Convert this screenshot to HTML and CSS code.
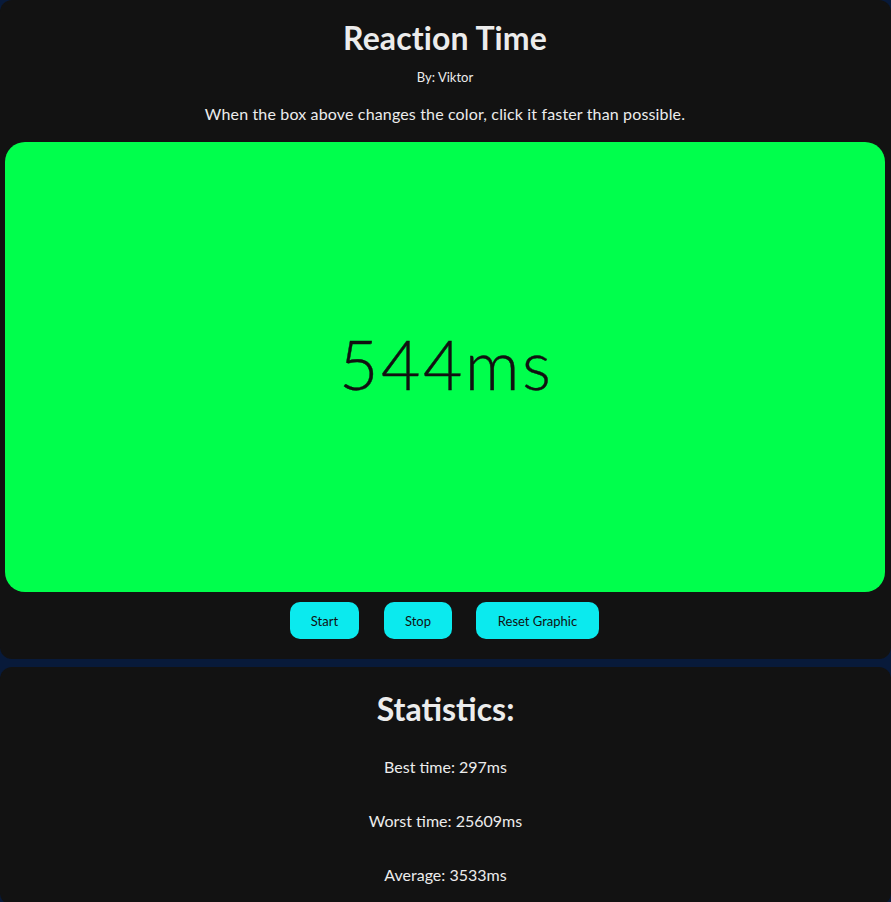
FILE: index.html
```html
<!DOCTYPE html>
<html lang="en">
<head>
<meta charset="utf-8">
<title>Reaction Time</title>
<link rel="stylesheet" href="styles.css">
</head>
<body>
<main class="page">
  <section class="card game">
    <h1 class="title">Reaction Time</h1>
    <p class="author">By: Viktor</p>
    <p class="desc">When the box above changes the color, click it faster than possible.</p>
    <div class="box"><span class="result">544ms</span></div>
    <div class="controls">
      <button class="btn btn-start">Start</button>
      <button class="btn btn-stop">Stop</button>
      <button class="btn btn-wide">Reset Graphic</button>
    </div>
  </section>
  <section class="card stats">
    <h2 class="stats-title">Statistics:</h2>
    <p class="stat">Best time: 297ms</p>
    <p class="stat">Worst time: 25609ms</p>
    <p class="stat">Average: 3533ms</p>
  </section>
</main>
</body>
</html>
```

FILE: styles.css
```css
html, body {
  margin: 0;
  padding: 0;
  background: #081a3a;
}
body {
  font-family: "Lato", "Open Sans", sans-serif;
  color: #ececec;
}
.page {
  display: flex;
  flex-direction: column;
  gap: 8px;
}
.card {
  background: #121212;
  border-radius: 12px;
  text-align: center;
}
.game {
  padding: 0 6px 20px 5px;
  display: flex;
  flex-direction: column;
  align-items: stretch;
}
.title {
  margin: 19px 0 0;
  font-size: 32px;
  line-height: 38px;
  font-weight: 700;
  letter-spacing: 0.1px;
}
.author {
  margin: 12px 0 0;
  font-size: 13px;
  line-height: 16px;
}
.desc {
  margin: 19px 0 0;
  font-size: 16px;
  line-height: 20px;
  letter-spacing: 0.15px;
}
.box {
  margin-top: 18px;
  height: 450px;
  background: #00ff4c;
  border-radius: 20px;
  display: flex;
  align-items: center;
  justify-content: center;
}
.result {
  color: #111111;
  font-size: 68px;
  font-weight: 300;
  line-height: 1;
  letter-spacing: 2.5px;
  padding-left: 2.5px;
  margin-top: -6px;
  -webkit-text-stroke: 0.4px #111111;
}
.controls {
  margin-top: 10px;
  display: flex;
  justify-content: center;
  gap: 24px;
  padding-right: 1px;
}
.btn {
  font-family: inherit;
  height: 37px;
  width: 69px;
  border: none;
  border-radius: 10px;
  background: #0beaee;
  color: #111111;
  font-size: 13px;
  padding: 0;
}
.btn-start {
  margin-right: 1px;
}
.btn-stop {
  width: 68px;
}
.btn-wide {
  width: 123px;
}
.stats {
  padding: 22px 0 20px;
}
.stats-title {
  margin: 0;
  font-size: 32px;
  line-height: 40px;
  font-weight: 700;
}
.stat {
  margin: 34px 0 0;
  font-size: 16px;
  line-height: 20px;
}
.stats-title + .stat {
  margin-top: 28px;
}
```
